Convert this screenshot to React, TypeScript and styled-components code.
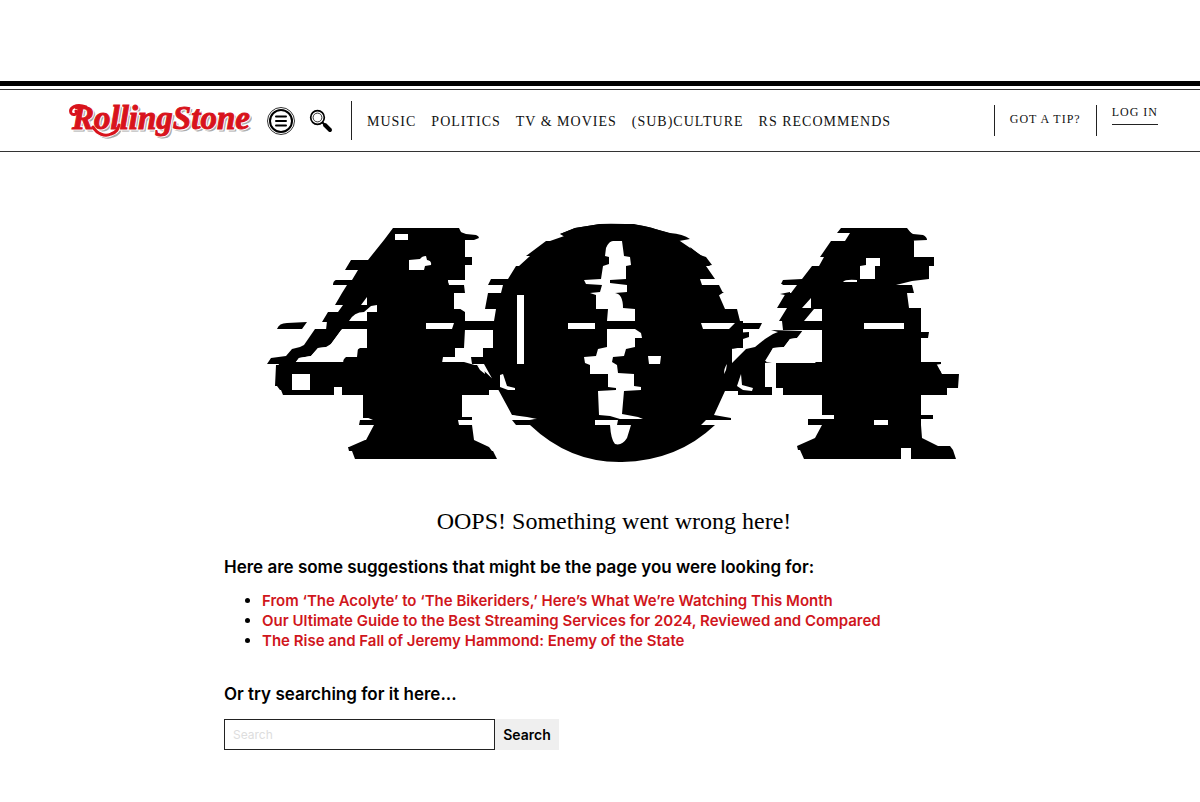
import React from "react";
import styled, { createGlobalStyle } from "styled-components";

const GlobalStyle = createGlobalStyle`
  *, *::before, *::after { box-sizing: border-box; }
  body {
    margin: 0;
    background: #fff;
    color: #000;
    font-family: Inter, "Liberation Sans", sans-serif;
  }
`;

const Page = styled.div`
  padding-top: 81px;
`;

const Header = styled.header`
  border-top: 5px solid #000;
`;

const HeaderBar = styled.div`
  display: flex;
  align-items: center;
  height: 63px;
  margin-top: 3px;
  padding: 0 42px 0 68px;
  border-top: 1px solid #333;
  border-bottom: 1px solid #333;
`;

const LogoLink = styled.a`
  display: flex;
  margin-right: 14px;
`;

const LogoText = styled.text`
  font-family: "Liberation Serif", serif;
  font-size: 33px;
  font-weight: 700;
  font-style: italic;
`;

const IconButton = styled.button`
  display: flex;
  padding: 0;
  border: 0;
  background: none;
  margin-right: 13px;
`;

const Nav = styled.nav`
  display: flex;
  align-items: center;
  gap: 15px;
  height: 39px;
  margin-left: 5px;
  padding: 2px 0 0 15px;
  border-left: 1px solid #222;
`;

const NavLink = styled.a`
  color: #111;
  font-family: "Liberation Serif", serif;
  font-size: 14px;
  line-height: 20px;
  letter-spacing: 1px;
  text-decoration: none;
  white-space: nowrap;
`;

const Account = styled.div`
  display: flex;
  height: 31px;
  margin-left: auto;
`;

const AccountItem = styled.div`
  padding: 0 15px;
  border-left: 1px solid #222;

  &:last-child {
    padding-right: 0;
  }
`;

const AccountLink = styled.a<{ $underlined?: boolean }>`
  display: block;
  color: #111;
  font-family: "Liberation Serif", serif;
  font-size: 12px;
  line-height: ${(p) => (p.$underlined ? "14px" : "28px")};
  padding-bottom: ${(p) => (p.$underlined ? "5px" : "0")};
  border-bottom: ${(p) => (p.$underlined ? "1px solid #222" : "0")};
  letter-spacing: 1px;
  text-decoration: none;
  white-space: nowrap;
`;

const Main = styled.main`
  max-width: 808px;
  margin: 0 auto;
  padding: 70px 0 52px 28px;
`;

const Art = styled.svg`
  display: block;
  width: 100%;
  max-width: 700px;
  height: auto;
  margin: 0 auto;
`;

const ArtText = styled.text`
  font-family: "DejaVu Serif", serif;
  font-size: 180px;
  font-weight: 700;
`;

const Oops = styled.h1`
  margin: 39px 0 0;
  font-family: "Liberation Serif", serif;
  font-size: 24px;
  line-height: 36px;
  font-weight: 400;
  text-align: center;
`;

const Subhead = styled.h2`
  margin: 0;
  font-size: 17px;
  line-height: 24px;
  font-weight: 600;
`;

const Suggestions = styled.section`
  margin-top: 16px;
`;

const SuggestionList = styled.ul`
  margin: 12px 0 0;
  padding-left: 38px;
  font-size: 15px;
  line-height: 20px;
`;

const SuggestionLink = styled.a`
  color: #d0161c;
  font-weight: 600;
  text-decoration: none;
`;

const SearchSection = styled.section`
  margin-top: 31px;
`;

const SearchForm = styled.form`
  display: flex;
  height: 31px;
  margin-top: 13px;
`;

const SearchInput = styled.input`
  width: 271px;
  padding: 0 8px;
  border: 1px solid #222;
  border-radius: 0;
  font-family: inherit;
  font-size: 12px;

  &::placeholder {
    color: #ddd;
  }
`;

const SearchButton = styled.button`
  width: 64px;
  padding: 0;
  border: 0;
  background: #efefef;
  color: #000;
  font-family: inherit;
  font-size: 14px;
  font-weight: 600;
`;

/* A displaced scan band: top y, bottom y, then left/right x at the top and at the bottom. */
type Band = [number, number, number, number, number, number];

const BANDS: Band[] = [
  // left figure
  [228, 240, 393, 459, 384, 465],
  [240, 260, 384, 465, 368, 465],
  [260, 270, 351, 465, 345, 465],
  [257, 265, 465, 472, 465, 472],
  [270, 280, 358, 465, 352, 465],
  [280, 285, 336, 448, 333, 449],
  [285, 293, 347, 464, 342, 465],
  [293, 305, 342, 454, 335, 454],
  [305, 312, 343, 454, 338, 465],
  [312, 322, 328, 465, 322, 465],
  [321, 330, 327, 500, 326, 500],
  [329, 348, 367, 465, 367, 464],
  [348, 357, 358, 455, 357, 455],
  [357, 363, 344, 443, 343, 442],
  [362, 366, 280, 464, 278, 478],
  [365, 386, 276, 478, 275, 500],
  [386, 390, 277, 500, 280, 500],
  [390, 395, 281, 489, 283, 489],
  [395, 418, 363, 462, 363, 462],
  [417, 420, 366, 472, 373, 472],
  [420, 425, 360, 458, 359, 459],
  [425, 440, 374, 472, 366, 474],
  [440, 447, 365, 474, 349, 489],
  [447, 451, 348, 489, 349, 492],
  [451, 459, 352, 493, 355, 497],
  // centre figure
  [224, 228, 600, 634, 575, 652],
  [228, 234, 575, 652, 560, 672],
  [234, 241, 570, 672, 550, 680],
  [241, 256, 546, 680, 526, 702],
  [256, 266, 530, 702, 519, 710],
  [266, 279, 516, 706, 508, 715],
  [279, 285, 491, 700, 488, 702],
  [285, 293, 503, 719, 501, 723],
  [293, 309, 488, 718, 485, 725],
  [309, 321, 496, 737, 494, 740],
  [321, 330, 494, 741, 493, 743],
  [330, 348, 493, 743, 493, 743],
  [348, 357, 483, 732, 483, 732],
  [357, 364, 471, 732, 472, 732],
  [364, 391, 484, 732, 499, 727],
  [391, 415, 499, 725, 512, 714],
  [415, 420, 512, 713, 534, 706],
  [420, 425, 512, 706, 516, 701],
  // right figure
  [228, 233, 841, 907, 837, 911],
  [233, 241, 850, 911, 845, 914],
  [241, 257, 831, 914, 820, 914],
  [257, 266, 824, 934, 819, 934],
  [266, 279, 812, 929, 802, 929],
  [279, 281, 802, 929, 801, 912],
  [281, 285, 786, 912, 782, 896],
  [285, 293, 797, 912, 791, 914],
  [293, 308, 786, 907, 777, 909],
  [308, 321, 787, 921, 779, 921],
  [321, 330, 782, 921, 783, 921],
  [330, 339, 822, 921, 822, 921],
  [332, 338, 921, 929, 921, 928],
  [339, 364, 822, 921, 822, 921],
  [363, 374, 776, 936, 776, 942],
  [374, 388, 776, 959, 776, 958],
  [387, 395, 783, 947, 783, 947],
  [395, 415, 822, 921, 822, 921],
  [415, 419, 834, 933, 834, 933],
  [419, 425, 808, 921, 808, 921],
  [425, 438, 822, 921, 815, 922],
  [438, 446, 815, 922, 797, 938],
  [446, 450, 797, 950, 798, 953],
  [450, 459, 800, 953, 804, 956],
];

const FRAGMENTS = [
  "M458 231 L466 234 L476 235 Q479 236 479 238 L474 240 L458 240 Z",
  "M336 280 L350 280 L350 285 L333 285 Q333 281 336 280 Z",
  "M277 329 Q279 323 287 323 L307 322 L302 329 Z",
  "M315 329 L342 329 L331 344 L326 347 L318 348 L311 356 L299 358 L295 363 L280 364 L267 364 L271 358 L286 356 L292 349 L300 347 L304 345 Z",
  "M442 362 L463 363 L466 365 L477 366 L484 374 L484 390 L442 390 Z",
  "M560 234 L575 228 L600 224 Q640 223 655 229 L670 233 Q683 234 690 239 L679 241 L570 240 Z",
  "M690 247 L700 255 L706 257 L712 265 L700 267 Z",
  "M700 292 L724 292 L718 296 L713 293 Z",
  "M738 323 L762 323 L759 329 L738 329 Z",
  "M737 321 L743 321 L743 347 L737 347 Z",
  "M735 333 L749 332 L749 337 L743 339 L743 347 L732 349 Z",
  "M701 415 L714 415 L731 418 L731 420 L700 420 Z",
  "M530 425 Q570 463 622 462 Q677 461 715 425 Z",
  "M771 330 L803 331 L801 335 L797 338 L790 339 L784 347 L773 348 L765 361 L772 362 L765 363 L765 387 L772 387 L772 395 L738 395 L738 391 L724 391 L724 368 L732 363 L746 349 L755 347 L765 339 L773 334 L778 332 Z",
  "M905 229 L913 234 L923 235 Q927 237 927 240 L905 241 Z",
  "M783 280 L802 279 L802 285 L781 284 Z",
  "M780 294 L790 292 L790 296 Z",
  "M921 362 L941 362 L941 364 L934 365 L941 372 L921 373 Z",
];

const GAPS = [
  "M395 234 H408 V240 H395 Z",
  "M409 260 L420 259 Q422 256 426 256 L427 260 Q432 261 431 265 L425 266 L424 270 H409 Z",
  "M448 280 H466 V284 H450 Q448 283 448 280 Z",
  "M454 293 H466 V309 H454 Z",
  "M361 305 L367 297 V305 Z",
  "M349 321 Q354 312 364 312 L371 306 L377 305 V312 H367 V321 Z",
  "M342 329 H367 V348 H360 L357 350 V356 L346 357 L343 360 V362 H296 L299 358 L311 356 L318 348 L328 347 L331 344 Z",
  "M426 323 H454 L452 329 H426 Z",
  "M292 374 H310 V390 H292 Z",
  "M334 387 H342 V396 H334 Z",
  "M477 365 L484 366 L485 374 L480 370 Z",
  "M605 256 L606 248 Q609 241 613 241 H622 L624 256 L630 257 L631 265 L626 266 V279 L610 280 V283 L627 285 V292 L615 293 Q623 294 623 308 L635 309 V321 H607 L608 309 H596 V295 L590 293 L600 292 L602 285 L586 284 L584 280 L601 279 L603 266 L609 264 V257 Z",
  "M607 329 V347 L598 349 L596 356 L584 357 L585 363 L590 365 V374 H608 V387 L616 388 L616 390 L598 391 L599 415 L610 416 L620 419 L643 419 L638 417 L622 414 L624 391 L641 390 V387 L634 386 V374 L618 373 L617 365 L612 362 L613 357 L624 356 L626 349 L635 347 V338 H642 L641 333 L635 329 Z",
  "M595 420 H618 L617 425 H631 L627 438 Q622 446 615 444 Q611 440 610 425 H595 Z",
  "M568 323 H595 V329 H568 Z",
  "M517 295 H524 V364 H517 Z",
  "M701 323 H735 L729 329 H703 Z",
  "M648 356 H661 L660 364 H649 Z",
  "M500 375 L503 374 L507 386 L515 388 V390 H508 L500 387 Z",
  "M512 415 L527 417 L537 419 L512 420 Z",
  "M727 364 Q724 368 724 374 L726 370 Z",
  "M741 374 L742 385 L753 388 L752 391 L743 390 L737 386 Z",
  "M860 266 L866 265 V258 H880 V266 H875 V279 H860 Z",
  "M843 282 Q845 279 857 280 V282 Z",
  "M811 298 V308 H802 Z",
  "M814 309 H822 V321 H804 Z",
  "M803 330 H822 V362 H766 L773 348 L784 347 L790 339 L797 338 Z",
  "M864 323 H904 V329 H864 Z",
  "M874 420 H888 V425 H874 Z",
  "M901 448 H911 V460 H901 Z",
];

const bandPath = ([top, bottom, l0, r0, l1, r1]: Band) =>
  `M${l0} ${top} H${r0} L${r1} ${bottom} H${l1} Z`;

const GlitchArt = () => (
  <Art viewBox="264 222 700 242" role="img" aria-label="404">
    <ArtText x="404" y="421" textAnchor="middle">4</ArtText>
    <ArtText x="617" y="421" textAnchor="middle">0</ArtText>
    <ArtText x="862" y="421" textAnchor="middle">4</ArtText>
    <path d={BANDS.map(bandPath).join(" ")} />
    <path d={FRAGMENTS.join(" ")} />
    <path d={GAPS.join(" ")} fill="#fff" />
    <path d="M822 332 L829 333 V337 L822 339 Z" />
  </Art>
);

const LOGO_ARM = "M18 6 C8 2 1 7 3 12 C5 15 10 13 8 10";
const LOGO_TAIL = "M25 26 C29 33 37 36 43 33 C49 31 50 28 51 24";

const Logo = () => (
  <svg width="184" height="40" viewBox="0 0 184 40" role="img" aria-label="Rolling Stone">
    <g fill="#aaa" stroke="#aaa" transform="translate(2 2)">
      <path d={LOGO_TAIL} fill="none" strokeWidth="3" strokeLinecap="round" />
      <LogoText x="4" y="28" strokeWidth="1">RollingStone</LogoText>
    </g>
    <g fill="#d8131c" stroke="#d8131c">
      <path
        d={`${LOGO_ARM} ${LOGO_TAIL}`}
        fill="none"
        stroke="#fff"
        strokeWidth="5"
        strokeLinecap="round"
      />
      <LogoText x="4" y="28" stroke="#fff" strokeWidth="3">RollingStone</LogoText>
      <path
        d={`${LOGO_ARM} ${LOGO_TAIL}`}
        fill="none"
        strokeWidth="3"
        strokeLinecap="round"
      />
      <LogoText x="4" y="28" strokeWidth="1">RollingStone</LogoText>
    </g>
  </svg>
);

const MenuIcon = () => (
  <svg width="30" height="30" viewBox="0 0 30 30" fill="none" stroke="#000" aria-hidden="true">
    <circle cx="15" cy="15" r="13.5" strokeWidth="0.8" />
    <circle cx="15" cy="15" r="11" strokeWidth="2" />
    <path d="M10 10.5 H20 M10 15 H20 M10 19.5 H20" strokeWidth="2" strokeLinecap="round" />
  </svg>
);

const SearchIcon = () => (
  <svg width="24" height="24" viewBox="0 0 24 24" fill="none" stroke="#000" aria-hidden="true">
    <circle cx="8.5" cy="8.5" r="6.8" strokeWidth="1.7" />
    <circle cx="8.5" cy="8.5" r="4.4" strokeWidth="0.8" />
    <path d="M13 13 L16 16" strokeWidth="2" />
    <path d="M16 16 L21 21" strokeWidth="4" strokeLinecap="round" />
  </svg>
);

const SECTIONS = ["MUSIC", "POLITICS", "TV & MOVIES", "(SUB)CULTURE", "RS RECOMMENDS"];

const SUGGESTIONS = [
  "From ‘The Acolyte’ to ‘The Bikeriders,’ Here’s What We’re Watching This Month",
  "Our Ultimate Guide to the Best Streaming Services for 2024, Reviewed and Compared",
  "The Rise and Fall of Jeremy Hammond: Enemy of the State",
];

export default function App() {
  return (
    <Page>
      <GlobalStyle />
      <Header>
        <HeaderBar>
          <LogoLink href="#"><Logo /></LogoLink>
          <IconButton type="button" aria-label="Menu"><MenuIcon /></IconButton>
          <IconButton type="button" aria-label="Open search"><SearchIcon /></IconButton>
          <Nav>
            {SECTIONS.map((name) => (
              <NavLink key={name} href="#">{name}</NavLink>
            ))}
          </Nav>
          <Account>
            <AccountItem><AccountLink href="#">GOT A TIP?</AccountLink></AccountItem>
            <AccountItem><AccountLink href="#" $underlined>LOG IN</AccountLink></AccountItem>
          </Account>
        </HeaderBar>
      </Header>
      <Main>
        <GlitchArt />
        <Oops>OOPS! Something went wrong here!</Oops>
        <Suggestions>
          <Subhead>Here are some suggestions that might be the page you were looking for:</Subhead>
          <SuggestionList>
            {SUGGESTIONS.map((title) => (
              <li key={title}><SuggestionLink href="#">{title}</SuggestionLink></li>
            ))}
          </SuggestionList>
        </Suggestions>
        <SearchSection>
          <Subhead as="label" htmlFor="site-search">Or try searching for it here...</Subhead>
          <SearchForm onSubmit={(e) => e.preventDefault()}>
            <SearchInput id="site-search" type="text" placeholder="Search" />
            <SearchButton type="submit">Search</SearchButton>
          </SearchForm>
        </SearchSection>
      </Main>
    </Page>
  );
}
